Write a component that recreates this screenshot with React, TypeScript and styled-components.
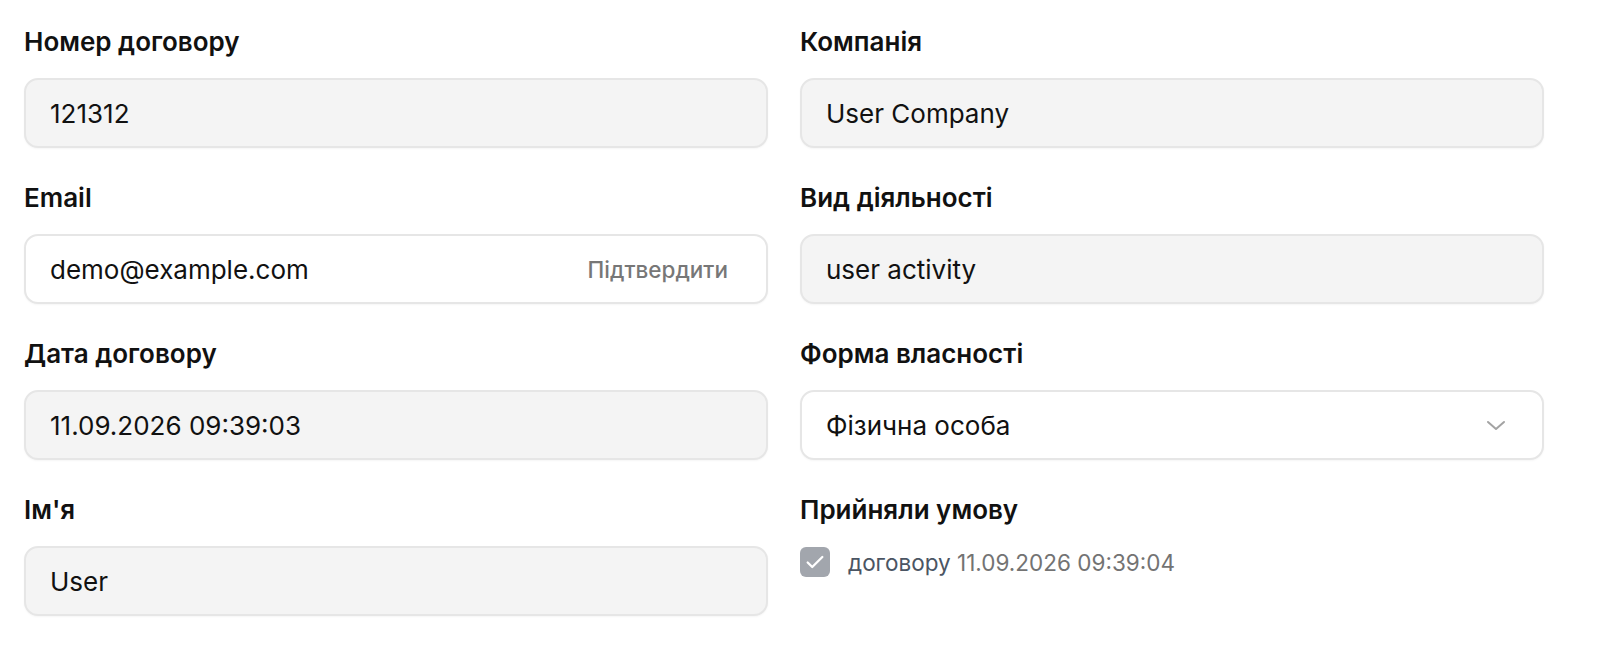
import React from 'react';
import styled, { createGlobalStyle } from 'styled-components';

const GlobalStyle = createGlobalStyle`
  body {
    margin: 0;
    background: #ffffff;
    font-family: Inter, "Noto Sans", sans-serif;
    color: #111111;
  }
`;

const Form = styled.div`
  display: grid;
  grid-template-columns: 744px 744px;
  column-gap: 32px;
  row-gap: 32px;
  padding: 24px 64px 24px 24px;
`;

const Field = styled.div`
  display: flex;
  flex-direction: column;
  gap: 18px;
`;

const Label = styled.div`
  font-size: 26px;
  line-height: 36px;
  font-weight: 600;
  color: #111111;
`;

const InputBox = styled.div<{ $readonly?: boolean }>`
  box-sizing: border-box;
  height: 70px;
  display: flex;
  align-items: center;
  justify-content: space-between;
  padding: 0 34px 0 24px;
  border: 2px solid #e6e6e6;
  border-radius: 14px;
  background: ${p => (p.$readonly ? '#f4f4f4' : '#ffffff')};
  box-shadow: 0 1px 2px rgba(0, 0, 0, 0.04);
  font-size: 26px;
  color: #111111;
`;

const Action = styled.span`
  font-size: 22.5px;
  font-weight: 500;
  color: #777777;
  margin-right: 4px;
`;

const Chevron = styled.svg`
  width: 24px;
  height: 24px;
  color: #a3a3a3;
`;

const CheckRow = styled.div`
  display: flex;
  align-items: center;
  gap: 18px;
  height: 32px;
`;

const CheckBox = styled.div`
  width: 30px;
  height: 30px;
  border-radius: 6px;
  background: #a2a6ad;
  display: flex;
  align-items: center;
  justify-content: center;
`;

const CheckText = styled.span`
  font-size: 22.5px;
  color: #737373;
`;

const Link = styled.span`
  color: #4b5563;
`;

export default function App() {
  return (
    <>
      <GlobalStyle />
      <Form>
        <Field>
          <Label>Номер договору</Label>
          <InputBox $readonly>121312</InputBox>
        </Field>
        <Field>
          <Label>Компанія</Label>
          <InputBox $readonly>User Company</InputBox>
        </Field>
        <Field>
          <Label>Email</Label>
          <InputBox>
            <span>demo@example.com</span>
            <Action>Підтвердити</Action>
          </InputBox>
        </Field>
        <Field>
          <Label>Вид діяльності</Label>
          <InputBox $readonly>user activity</InputBox>
        </Field>
        <Field>
          <Label>Дата договору</Label>
          <InputBox $readonly>11.09.2026 09:39:03</InputBox>
        </Field>
        <Field>
          <Label>Форма власності</Label>
          <InputBox>
            <span>Фізична особа</span>
            <Chevron viewBox="0 0 24 24" fill="none" stroke="currentColor" strokeWidth="2" strokeLinecap="round" strokeLinejoin="round">
              <path d="M4 9l8 7 8-7" />
            </Chevron>
          </InputBox>
        </Field>
        <Field>
          <Label>Ім'я</Label>
          <InputBox $readonly>User</InputBox>
        </Field>
        <Field>
          <Label>Прийняли умову</Label>
          <CheckRow>
            <CheckBox>
              <svg width="22" height="22" viewBox="0 0 24 24" fill="none" stroke="#ffffff" strokeWidth="2.5" strokeLinecap="round" strokeLinejoin="round">
                <path d="M4 12.5l5 5L20 6.5" />
              </svg>
            </CheckBox>
            <CheckText>
              <Link>договору</Link> 11.09.2026 09:39:04
            </CheckText>
          </CheckRow>
        </Field>
      </Form>
    </>
  );
}
